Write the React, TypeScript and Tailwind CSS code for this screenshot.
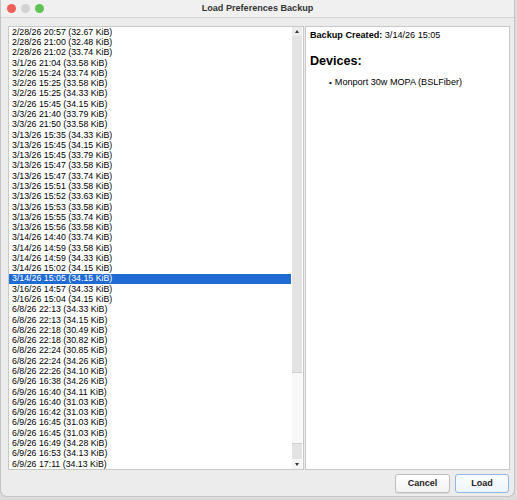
import React from "react";

const backups = [
  "2/28/26 20:57 (32.67 KiB)",
  "2/28/26 21:00 (32.48 KiB)",
  "2/28/26 21:02 (33.74 KiB)",
  "3/1/26 21:04 (33.58 KiB)",
  "3/2/26 15:24 (33.74 KiB)",
  "3/2/26 15:25 (33.58 KiB)",
  "3/2/26 15:25 (34.33 KiB)",
  "3/2/26 15:45 (34.15 KiB)",
  "3/3/26 21:40 (33.79 KiB)",
  "3/3/26 21:50 (33.58 KiB)",
  "3/13/26 15:35 (34.33 KiB)",
  "3/13/26 15:45 (34.15 KiB)",
  "3/13/26 15:45 (33.79 KiB)",
  "3/13/26 15:47 (33.58 KiB)",
  "3/13/26 15:47 (33.74 KiB)",
  "3/13/26 15:51 (33.58 KiB)",
  "3/13/26 15:52 (33.63 KiB)",
  "3/13/26 15:53 (33.58 KiB)",
  "3/13/26 15:55 (33.74 KiB)",
  "3/13/26 15:56 (33.58 KiB)",
  "3/14/26 14:40 (33.74 KiB)",
  "3/14/26 14:59 (33.58 KiB)",
  "3/14/26 14:59 (34.33 KiB)",
  "3/14/26 15:02 (34.15 KiB)",
  "3/14/26 15:05 (34.15 KiB)",
  "3/16/26 14:57 (34.33 KiB)",
  "3/16/26 15:04 (34.15 KiB)",
  "6/8/26 22:13 (34.33 KiB)",
  "6/8/26 22:13 (34.15 KiB)",
  "6/8/26 22:18 (30.49 KiB)",
  "6/8/26 22:18 (30.82 KiB)",
  "6/8/26 22:24 (30.85 KiB)",
  "6/8/26 22:24 (34.26 KiB)",
  "6/8/26 22:26 (34.10 KiB)",
  "6/9/26 16:38 (34.26 KiB)",
  "6/9/26 16:40 (34.11 KiB)",
  "6/9/26 16:40 (31.03 KiB)",
  "6/9/26 16:42 (31.03 KiB)",
  "6/9/26 16:45 (31.03 KiB)",
  "6/9/26 16:45 (31.03 KiB)",
  "6/9/26 16:49 (34.28 KiB)",
  "6/9/26 16:53 (34.13 KiB)",
  "6/9/26 17:11 (34.13 KiB)",
];

const selected = 24;

export default function App() {
  return (
    <div className="w-[517px] h-[500px] bg-[#dcdcdc] font-['Liberation_Sans',Arial,sans-serif] text-black overflow-hidden">
      <div className="w-[515px] h-[497px] flex flex-col bg-[#ececec] rounded-b-[7px] border-l border-r border-b border-[#c4c4c4]">
        {/* title bar */}
        <div className="relative h-[18px] flex items-center justify-center bg-[#f0f0f0] border-b border-[#d6d6d6]">
          <div className="absolute left-[6px] top-[4px] flex gap-[5px]">
            <div className="w-[9px] h-[9px] rounded-full bg-[#ed5f57]" />
            <div className="w-[9px] h-[9px] rounded-full bg-[#d2d2d2]" />
            <div className="w-[9px] h-[9px] rounded-full bg-[#5fc353]" />
          </div>
          <span className="text-[9.1px] font-bold text-[#333] leading-none">Load Preferences Backup</span>
        </div>

        <div className="flex flex-col flex-1 pl-[7px] pr-[4px] pt-[8px]">
          <div className="flex h-[444px] gap-[1px]">
            {/* list */}
            <div className="w-[296px] flex bg-white border border-[#c8c8c8]">
              <div className="flex-1 flex flex-col">
                {backups.map((b, i) => (
                  <div
                    key={i}
                    className={`h-[10.29px] flex items-center pl-[3px] text-[8.8px] leading-none whitespace-nowrap ${
                      i === selected ? "bg-[#1f6bd3] text-white" : "text-black"
                    }`}
                  >
                    {b}
                  </div>
                ))}
              </div>
              {/* scrollbar */}
              <div className="w-[11px] flex flex-col bg-[#e3e3e3] border-l border-white mr-[1px]">
                <div className="h-[9px] flex items-center justify-center bg-[#ececec]">
                  <div className="w-0 h-0 border-l-[2.5px] border-r-[2.5px] border-b-[3px] border-l-transparent border-r-transparent border-b-[#333]" />
                </div>
                <div className="h-[336px]" />
                <div className="h-[72px] bg-[#f8f8f8] border-y border-[#d0d0d0]" />
                <div className="flex-1" />
                <div className="h-[10px] flex items-center justify-center bg-[#f6f6f6]">
                  <div className="w-0 h-0 border-l-[2.5px] border-r-[2.5px] border-t-[3px] border-l-transparent border-r-transparent border-t-[#333]" />
                </div>
              </div>
            </div>

            {/* details */}
            <div className="flex-1 bg-white border border-[#c8c8c8] pl-[4px] pt-[3px]">
              <div className="text-[9.1px] leading-[11px]">
                <span className="font-bold">Backup Created:</span> 3/14/26 15:05
              </div>
              <div className="text-[12.6px] font-bold leading-[15px] mt-[13px]">Devices:</div>
              <div className="flex items-center text-[9.1px] leading-[11px] mt-[8px] pl-[19px]">
                <span className="mr-[3px] text-[8px]">•</span>
                <span>Monport 30w MOPA (BSLFiber)</span>
              </div>
            </div>
          </div>

          {/* buttons */}
          <div className="flex justify-end gap-[5px] mt-[4px] pr-[1px]">
            <button className="w-[55px] h-[19px] rounded-[3px] border border-[#bdbdbd] bg-gradient-to-b from-white to-[#f2f2f2] text-[9px] font-bold text-[#222] shadow-[0_1px_0_rgba(0,0,0,0.08)]">
              Cancel
            </button>
            <button className="w-[54px] h-[19px] rounded-[3px] border border-[#8fb7e3] bg-gradient-to-b from-[#fafdff] to-[#edf4fb] text-[9px] font-bold text-[#222]">
              Load
            </button>
          </div>
        </div>
      </div>
    </div>
  );
}
